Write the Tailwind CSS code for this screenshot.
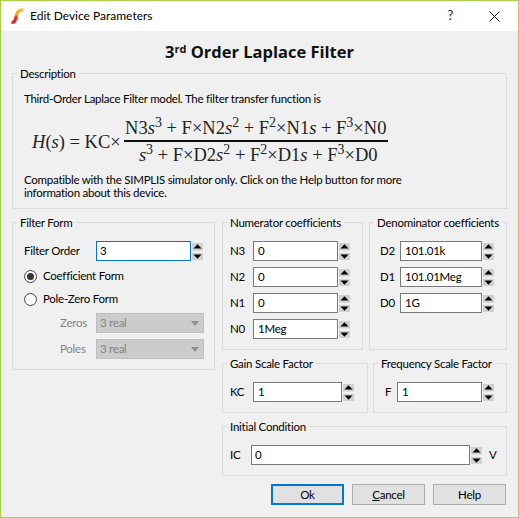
<!DOCTYPE html>
<html lang="en">
<head>
    <meta charset="UTF-8">
    <title>Edit Device Parameters</title>
    <script src="https://cdn.jsdelivr.net/npm/@tailwindcss/browser@4"></script>
</head>
<body class="font-['Lato',sans-serif] text-[11.5px] tracking-[-0.25px] text-black bg-[#f0f0f0]">
<div class="w-[519px] h-[518px] border border-[#a8cf45] flex flex-col overflow-hidden">
    <!-- Title bar -->
    <div class="h-[30px] bg-white flex items-center shrink-0">
        <svg class="ml-[9px] w-[14px] h-[16px]" viewBox="0 0 14 16">
            <defs><linearGradient id="logo" x1="0" y1="1" x2="0" y2="0"><stop offset="0" stop-color="#ed1c24"/><stop offset="0.4" stop-color="#f0231f"/><stop offset="0.6" stop-color="#f9a51a"/><stop offset="1" stop-color="#fdc010"/></linearGradient></defs>
            <path d="M1.500 14.500 C5.500 14.500 5.500 11 6.500 7 C7.500 3 9 1.800 13 1.800" fill="none" stroke="url(#logo)" stroke-width="3.200"/>
        </svg>
        <span class="ml-[6px] text-[12px] tracking-normal">Edit Device Parameters</span>
        <span class="ml-auto text-[13px] text-[#222]">?</span>
        <svg class="ml-[36px] mr-[18px] w-[11px] h-[11px]" viewBox="0 0 11 11"><path d="M.5.5l10 10M10.500.5l-10 10" stroke="#111" fill="none"/></svg>
    </div>

    <div class="flex-1 px-[11px] flex flex-col">
        <h1 class="h-[42px] pt-[1px] flex items-center justify-center font-['Open_Sans',sans-serif] font-bold text-[16.5px] tracking-normal text-[#111]"><span>3<sup class="text-[11px]">rd</sup> Order Laplace Filter</span></h1>

        <!-- Description -->
        <div class="relative h-[136px] border border-[#dcdcdc] pl-[11px] pt-[17px]">
            <span class="absolute -top-[9px] left-[4px] px-[3px] bg-[#f0f0f0]">Description</span>
            <p class="leading-[16px]">Third-Order Laplace Filter model. The filter transfer function is</p>
            <div class="mt-[10px] ml-[8px] flex items-center font-['Liberation_Serif',serif] text-[18.5px] tracking-normal leading-[22px] text-[#222]">
                <span class="whitespace-pre"><i>H</i>(<i>s</i>) = KC×</span>
                <div class="flex flex-col items-center ml-[3px]">
                    <div class="w-[264px] border-b-2 border-[#111] text-center whitespace-pre h-[25px]">N3<i>s</i><sup class="text-[14px]">3</sup> + F×N2<i>s</i><sup class="text-[14px]">2</sup> + F<sup class="text-[14px]">2</sup>×N1<i>s</i> + F<sup class="text-[14px]">3</sup>×N0</div>
                    <div class="w-[264px] text-center whitespace-pre h-[24px] pt-[2px] pl-[5px]"><i>s</i><sup class="text-[14px]">3</sup> + F×D2<i>s</i><sup class="text-[14px]">2</sup> + F<sup class="text-[14px]">2</sup>×D1<i>s</i> + F<sup class="text-[14px]">3</sup>×D0</div>
                </div>
            </div>
            <p class="mt-[7px] leading-[13px] w-[400px]">Compatible with the SIMPLIS simulator only. Click on the Help button for more information about this device.</p>
        </div>

        <div class="mt-[13px] flex gap-[7px]">
            <!-- Filter Form -->
            <div class="relative w-[203px] h-[148px] border border-[#dcdcdc] pl-[11px] pt-[18px]">
                <span class="absolute -top-[9px] left-[4px] px-[3px] bg-[#f0f0f0]">Filter Form</span>
                <div class="flex items-center h-[20px]">
                    <span class="w-[72px]">Filter Order</span>
                    <div class="w-[95px] h-[20px] border border-[#0078d7] bg-white px-[3px] leading-[18px]">3</div>
                    <svg class="ml-[1px] mt-[1px] w-[11px] h-[17px]" viewBox="0 0 11 17"><path d="M0 0h11v7.500H0zM0 10h11v7H0z" fill="#d0d0d0"/><path d="M5.500 1.200L9.500 5.500H1.500zM5.500 15.800L1.500 11.500h8z" fill="#000"/></svg>
                </div>
                <div class="mt-[7px] flex items-center h-[16px]">
                    <span class="w-[13px] h-[13px] rounded-full border border-[#444] bg-white flex items-center justify-center"><span class="w-[7px] h-[7px] rounded-full bg-[#333]"></span></span>
                    <span class="ml-[6px]">Coefficient Form</span>
                </div>
                <div class="mt-[7px] flex items-center h-[16px]">
                    <span class="w-[13px] h-[13px] rounded-full border border-[#444] bg-white"></span>
                    <span class="ml-[6px]">Pole-Zero Form</span>
                </div>
                <div class="mt-[6px] flex items-center h-[20px] text-[#838383]">
                    <span class="ml-[36px] w-[36px]">Zeros</span>
                    <div class="w-[108px] h-[20px] bg-[#cccccc] border border-[#bfbfbf] pl-[3px] flex items-center justify-between pr-[4px]">3 real
                        <svg class="w-[8px] h-[5px]" viewBox="0 0 8 5"><path d="M0 0h8L4 5z" fill="#8e8e8e"/></svg>
                    </div>
                </div>
                <div class="mt-[6px] flex items-center h-[20px] text-[#838383]">
                    <span class="ml-[36px] w-[36px]">Poles</span>
                    <div class="w-[108px] h-[20px] bg-[#cccccc] border border-[#bfbfbf] pl-[3px] flex items-center justify-between pr-[4px]">3 real
                        <svg class="w-[8px] h-[5px]" viewBox="0 0 8 5"><path d="M0 0h8L4 5z" fill="#8e8e8e"/></svg>
                    </div>
                </div>
            </div>

            <div class="w-[285px] flex flex-col">
                <div class="flex gap-[6px]">
                    <!-- Numerator -->
                    <div class="relative w-[141px] h-[128px] border border-[#dcdcdc] pl-[7px] pt-[18px] flex flex-col gap-[6px]">
                        <span class="absolute -top-[9px] left-[4px] px-[3px] bg-[#f0f0f0] whitespace-nowrap">Numerator coefficients</span>
                        <div class="flex items-center h-[20px]"><span class="w-[23px]">N3</span><div class="w-[85px] h-[20px] border border-[#7a7a7a] bg-white px-[4px] leading-[18px]">0</div><svg class="ml-[1px] mt-[1px] w-[11px] h-[17px]" viewBox="0 0 11 17"><path d="M0 0h11v7.500H0zM0 10h11v7H0z" fill="#d0d0d0"/><path d="M5.500 1.200L9.500 5.500H1.500zM5.500 15.800L1.500 11.500h8z" fill="#000"/></svg></div>
                        <div class="flex items-center h-[20px]"><span class="w-[23px]">N2</span><div class="w-[85px] h-[20px] border border-[#7a7a7a] bg-white px-[4px] leading-[18px]">0</div><svg class="ml-[1px] mt-[1px] w-[11px] h-[17px]" viewBox="0 0 11 17"><path d="M0 0h11v7.500H0zM0 10h11v7H0z" fill="#d0d0d0"/><path d="M5.500 1.200L9.500 5.500H1.500zM5.500 15.800L1.500 11.500h8z" fill="#000"/></svg></div>
                        <div class="flex items-center h-[20px]"><span class="w-[23px]">N1</span><div class="w-[85px] h-[20px] border border-[#7a7a7a] bg-white px-[4px] leading-[18px]">0</div><svg class="ml-[1px] mt-[1px] w-[11px] h-[17px]" viewBox="0 0 11 17"><path d="M0 0h11v7.500H0zM0 10h11v7H0z" fill="#d0d0d0"/><path d="M5.500 1.200L9.500 5.500H1.500zM5.500 15.800L1.500 11.500h8z" fill="#000"/></svg></div>
                        <div class="flex items-center h-[20px]"><span class="w-[23px]">N0</span><div class="w-[85px] h-[20px] border border-[#7a7a7a] bg-white px-[4px] leading-[18px]">1Meg</div><svg class="ml-[1px] mt-[1px] w-[11px] h-[17px]" viewBox="0 0 11 17"><path d="M0 0h11v7.500H0zM0 10h11v7H0z" fill="#d0d0d0"/><path d="M5.500 1.200L9.500 5.500H1.500zM5.500 15.800L1.500 11.500h8z" fill="#000"/></svg></div>
                    </div>
                    <!-- Denominator -->
                    <div class="relative w-[138px] h-[128px] border border-[#dcdcdc] pl-[10px] pt-[18px] flex flex-col gap-[6px]">
                        <span class="absolute -top-[9px] left-[4px] px-[3px] bg-[#f0f0f0] whitespace-nowrap">Denominator coefficients</span>
                        <div class="flex items-center h-[20px]"><span class="w-[20px]">D2</span><div class="w-[82px] h-[20px] border border-[#7a7a7a] bg-white px-[4px] leading-[18px]">101.01k</div><svg class="ml-[1px] mt-[1px] w-[11px] h-[17px]" viewBox="0 0 11 17"><path d="M0 0h11v7.500H0zM0 10h11v7H0z" fill="#d0d0d0"/><path d="M5.500 1.200L9.500 5.500H1.500zM5.500 15.800L1.500 11.500h8z" fill="#000"/></svg></div>
                        <div class="flex items-center h-[20px]"><span class="w-[20px]">D1</span><div class="w-[82px] h-[20px] border border-[#7a7a7a] bg-white px-[4px] leading-[18px]">101.01Meg</div><svg class="ml-[1px] mt-[1px] w-[11px] h-[17px]" viewBox="0 0 11 17"><path d="M0 0h11v7.500H0zM0 10h11v7H0z" fill="#d0d0d0"/><path d="M5.500 1.200L9.500 5.500H1.500zM5.500 15.800L1.500 11.500h8z" fill="#000"/></svg></div>
                        <div class="flex items-center h-[20px]"><span class="w-[20px]">D0</span><div class="w-[82px] h-[20px] border border-[#7a7a7a] bg-white px-[4px] leading-[18px]">1G</div><svg class="ml-[1px] mt-[1px] w-[11px] h-[17px]" viewBox="0 0 11 17"><path d="M0 0h11v7.500H0zM0 10h11v7H0z" fill="#d0d0d0"/><path d="M5.500 1.200L9.500 5.500H1.500zM5.500 15.800L1.500 11.500h8z" fill="#000"/></svg></div>
                    </div>
                </div>

                <div class="mt-[13px] flex gap-[5px]">
                    <div class="relative w-[146px] h-[50px] border border-[#dcdcdc] pl-[7px] pt-[18px]">
                        <span class="absolute -top-[9px] left-[4px] px-[3px] bg-[#f0f0f0] whitespace-nowrap">Gain Scale Factor</span>
                        <div class="flex items-center h-[20px]"><span class="w-[23px]">KC</span><div class="w-[89px] h-[20px] border border-[#7a7a7a] bg-white px-[4px] leading-[18px]">1</div><svg class="ml-[1px] mt-[1px] w-[11px] h-[17px]" viewBox="0 0 11 17"><path d="M0 0h11v7.500H0zM0 10h11v7H0z" fill="#d0d0d0"/><path d="M5.500 1.200L9.500 5.500H1.500zM5.500 15.800L1.500 11.500h8z" fill="#000"/></svg></div>
                    </div>
                    <div class="relative w-[134px] h-[50px] border border-[#dcdcdc] pl-[11px] pt-[18px]">
                        <span class="absolute -top-[9px] left-[4px] px-[3px] bg-[#f0f0f0] whitespace-nowrap">Frequency Scale Factor</span>
                        <div class="flex items-center h-[20px]"><span class="w-[12px]">F</span><div class="w-[85px] h-[20px] border border-[#7a7a7a] bg-white px-[4px] leading-[18px]">1</div><svg class="ml-[1px] mt-[1px] w-[11px] h-[17px]" viewBox="0 0 11 17"><path d="M0 0h11v7.500H0zM0 10h11v7H0z" fill="#d0d0d0"/><path d="M5.500 1.200L9.500 5.500H1.500zM5.500 15.800L1.500 11.500h8z" fill="#000"/></svg></div>
                    </div>
                </div>

                <div class="relative mt-[13px] w-[285px] h-[50px] border border-[#dcdcdc] pl-[7px] pt-[18px]">
                    <span class="absolute -top-[9px] left-[4px] px-[3px] bg-[#f0f0f0] whitespace-nowrap">Initial Condition</span>
                    <div class="flex items-center h-[20px]"><span class="w-[21px]">IC</span><div class="w-[219px] h-[20px] border border-[#7a7a7a] bg-white px-[3px] leading-[18px]">0</div><svg class="ml-[1px] mt-[1px] w-[11px] h-[17px]" viewBox="0 0 11 17"><path d="M0 0h11v7.500H0zM0 10h11v7H0z" fill="#d0d0d0"/><path d="M5.500 1.200L9.500 5.500H1.500zM5.500 15.800L1.500 11.500h8z" fill="#000"/></svg><span class="ml-[7px]">V</span></div>
                </div>

                <div class="mt-[8px] mr-[1px] flex gap-[8px] justify-end">
                    <button class="w-[73px] h-[21px] bg-[#e1e1e1] border-2 border-[#0078d7]">Ok</button>
                    <button class="w-[73px] h-[21px] bg-[#e1e1e1] border border-[#adadad]"><u>C</u>ancel</button>
                    <button class="w-[73px] h-[21px] bg-[#e1e1e1] border border-[#adadad]">Help</button>
                </div>
            </div>
        </div>
    </div>
</div>
</body>
</html>
